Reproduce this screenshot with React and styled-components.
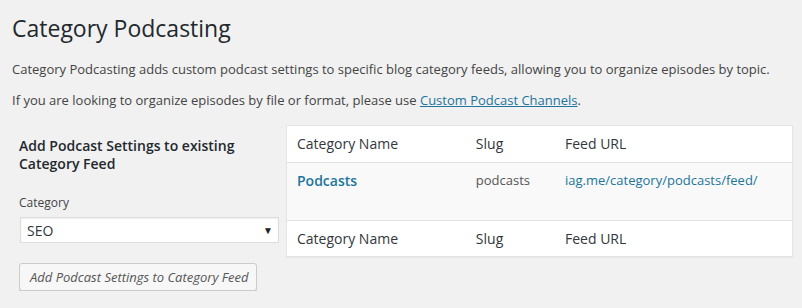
import React from "react";
import styled, { createGlobalStyle } from "styled-components";

const GlobalStyle = createGlobalStyle`
  html, body {
    margin: 0;
    padding: 0;
    background: #f1f1f1;
  }
  body {
    font-family: "Open Sans", "Liberation Sans", sans-serif;
    color: #444;
    font-size: 13px;
  }
`

const Wrap = styled.div`
  padding: 0 12px;
  width: 781px;
`

const Title = styled.h1`
  margin: 14px 0 0;
  font-size: 23px;
  font-weight: 400;
  line-height: 29px;
  color: #23282d;
`

const Para = styled.p`
  margin: ${(p) => p.$top}px 0 0;
  font-size: 13px;
  line-height: 19.5px;
  color: #444;
`

const Link = styled.a`
  color: #21759b;
  text-decoration: underline;
`

const Columns = styled.div`
  display: flex;
  margin-top: 14.5px;
  align-items: flex-start;
`

const LeftCol = styled.div`
  width: 267px;
  padding-left: 7px;
  flex-shrink: 0;
`

const FormTitle = styled.h2`
  margin: 12px 0 0;
  font-size: 14px;
  font-weight: 600;
  line-height: 17.5px;
  color: #23282d;
`

const Label = styled.label`
  display: block;
  margin-top: 22px;
  font-size: 12px;
  line-height: 18px;
  color: #444;
`

const SelectBox = styled.div`
  margin: 5px 0 0 1px;
  width: 259px;
  height: 26px;
  box-sizing: border-box;
  border: 1px solid #ddd;
  background: #fff;
  box-shadow: inset 0 1px 2px rgba(0, 0, 0, 0.07);
  display: flex;
  align-items: center;
  justify-content: space-between;
  padding: 0 5px 0 6px;
  font-size: 14px;
  color: #32373c;
`

const Arrow = styled.span`
  font-size: 10px;
  color: #222;
`

const Button = styled.button`
  margin-top: 20px;
  width: 238px;
  height: 28px;
  box-sizing: border-box;
  border: 1px solid #ccc;
  border-radius: 3px;
  background: #f7f7f7;
  box-shadow: 0 1px 0 #ccc;
  font-family: "Open Sans", "Liberation Sans", sans-serif;
  font-size: 13px;
  font-style: italic;
  color: #555;
  padding: 0 0 0 10px;
  text-align: left;
  white-space: nowrap;
  overflow: hidden;
`

const Table = styled.table`
  width: 507px;
  border-collapse: collapse;
  border: 1px solid #e5e5e5;
  background: #fff;
  box-shadow: 0 1px 1px rgba(0, 0, 0, 0.04);
  table-layout: fixed;
  font-size: 14px;
`

const Row = styled.tr`
  height: ${(p) => p.$h}px;
  background: ${(p) => (p.$alt ? "#f9f9f9" : "#fff")};
  border-top: ${(p) => (p.$line ? "1px solid #e1e1e1" : "none")};
`

const Cell = styled.td`
  padding: 8px 10px;
  vertical-align: top;
  line-height: 19.6px;
  text-align: left;
  font-size: ${(p) => (p.$small ? 13 : 14)}px;
  color: ${(p) => p.$color || "#32373c"};
  font-weight: ${(p) => (p.$bold ? 600 : 400)};
  white-space: nowrap;
`

const HeadCell = styled(Cell).attrs({ as: "th" })`
  font-weight: 400;
`

const columns = [179, 89, 237];

const HeaderRow = ({ line }) => (
  <Row $h={36} $line={line}>
    <HeadCell>Category Name</HeadCell>
    <HeadCell>Slug</HeadCell>
    <HeadCell>Feed URL</HeadCell>
  </Row>
)

const App = () => {
  return (
    <>
      <GlobalStyle />
      <Wrap>
        <Title>Category Podcasting</Title>
        <Para $top={17}>
          Category Podcasting adds custom podcast settings to specific blog category feeds, allowing you to organize episodes by topic.
        </Para>
        <Para $top={11.5}>
          If you are looking to organize episodes by file or format, please use <Link href="#">Custom Podcast Channels</Link>.
        </Para>
        <Columns>
          <LeftCol>
            <FormTitle>Add Podcast Settings to existing Category Feed</FormTitle>
            <Label>Category</Label>
            <SelectBox>
              <span>SEO</span>
              <Arrow>▼</Arrow>
            </SelectBox>
            <Button type="button">Add Podcast Settings to Category Feed</Button>
          </LeftCol>
          <Table>
            <colgroup>
              {columns.map((w, i) => (
                <col key={i} style={{ width: w }} />
              ))}
            </colgroup>
            <thead>
              <HeaderRow />
            </thead>
            <tbody>
              <Row $h={58} $alt $line>
                <Cell $bold $color="#21759b">Podcasts</Cell>
                <Cell $small $color="#555">podcasts</Cell>
                <Cell $small $color="#21759b">iag.me/category/podcasts/feed/</Cell>
              </Row>
            </tbody>
            <tfoot>
              <HeaderRow line />
            </tfoot>
          </Table>
        </Columns>
      </Wrap>
    </>
  )
}

export default App;
